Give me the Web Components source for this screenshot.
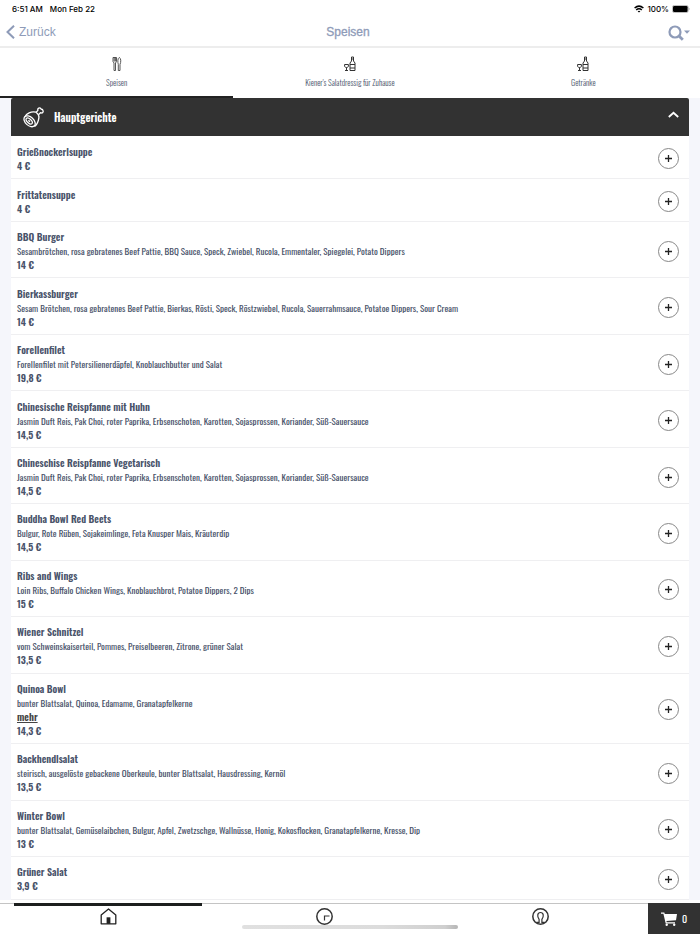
<!DOCTYPE html>
<html lang="de">
<head>
<meta charset="utf-8">
<meta name="viewport" content="width=device-width, initial-scale=1">
<title>Speisen</title>
<style>
  body {
    margin: 0;
    background: #fff;
    font-family: Oswald, "Liberation Sans Narrow", "Liberation Sans", sans-serif;
    color: #49536a;
  }
</style>
</head>
<body>
<menu-app></menu-app>

<script>
const dishes = [
  { name: 'Grießnockerlsuppe', price: '4 €' },
  { name: 'Frittatensuppe', price: '4 €' },
  { name: 'BBQ Burger', text: 'Sesambrötchen, rosa gebratenes Beef Pattie, BBQ Sauce, Speck, Zwiebel, Rucola, Emmentaler, Spiegelei, Potato Dippers', price: '14 €' },
  { name: 'Bierkassburger', text: 'Sesam Brötchen, rosa gebratenes Beef Pattie, Bierkas, Rösti, Speck, Röstzwiebel, Rucola, Sauerrahmsauce, Potatoe Dippers, Sour Cream', price: '14 €' },
  { name: 'Forellenfilet', text: 'Forellenfilet mit Petersilienerdäpfel, Knoblauchbutter und Salat', price: '19,8 €' },
  { name: 'Chinesische Reispfanne mit Huhn', text: 'Jasmin Duft Reis, Pak Choi, roter Paprika, Erbsenschoten, Karotten, Sojasprossen, Koriander, Süß-Sauersauce', price: '14,5 €' },
  { name: 'Chineschise Reispfanne Vegetarisch', text: 'Jasmin Duft Reis, Pak Choi, roter Paprika, Erbsenschoten, Karotten, Sojasprossen, Koriander, Süß-Sauersauce', price: '14,5 €' },
  { name: 'Buddha Bowl Red Beets', text: 'Bulgur, Rote Rüben, Sojakeimlinge, Feta Knusper Mais, Kräuterdip', price: '14,5 €' },
  { name: 'Ribs and Wings', text: 'Loin Ribs, Buffalo Chicken Wings, Knoblauchbrot, Potatoe Dippers, 2 Dips', price: '15 €' },
  { name: 'Wiener Schnitzel', text: 'vom Schweinskaiserteil, Pommes, Preiselbeeren, Zitrone, grüner Salat', price: '13,5 €' },
  { name: 'Quinoa Bowl', text: 'bunter Blattsalat, Quinoa, Edamame, Granatapfelkerne', more: true, price: '14,3 €' },
  { name: 'Backhendlsalat', text: 'steirisch, ausgelöste gebackene Oberkeule, bunter Blattsalat, Hausdressing, Kernöl', price: '13,5 €' },
  { name: 'Winter Bowl', text: 'bunter Blattsalat, Gemüselaibchen, Bulgur, Apfel, Zwetzschge, Wallnüsse, Honig, Kokosflocken, Granatapfelkerne, Kresse, Dip', price: '13 €' },
  { name: 'Grüner Salat', price: '3,9 €' }
]

const bottleIcon = `
  <svg width="12" height="16" viewBox="0 0 12 16" fill="none" stroke="#333" stroke-width="1" aria-hidden="true">
    <path d="M7.500 1h2v4l1.500 2v7.500h-5V7l1.500-2zM7.500 3h2M6 8.500h5M6 12h5"/>
    <path d="M.6 8.500h3.800v1.500c0 2-3.800 2-3.800 0zM2.500 11.500v3M1 14.500h3"/>
  </svg>`

/**
 * Clock, wifi and battery line.
 */
class StatusBar extends HTMLElement {
  constructor () {
    super()
    this.attachShadow({ mode: 'open' }).innerHTML = `
      <style>
        :host {
          display: flex;
          justify-content: space-between;
          align-items: center;
          height: 17px;
          padding: 0 10px 0 12px;
          font: 500 8px/16px Inter, "Liberation Sans", sans-serif;
          color: #000;
        }
        div { display: flex; align-items: center; }
        .left { gap: 7px; }
        .right { gap: 3px; }
      </style>
      <div class="left"><span>6:51 AM</span><span>Mon Feb 22</span></div>
      <div class="right">
        <svg width="10" height="8" viewBox="0 0 10 8" fill="none" stroke="#000" stroke-width="1.500" aria-hidden="true">
          <path d="M.6 3q4.400-3.700 8.800 0M2.200 4.900q2.800-2.300 5.600 0"/>
          <path d="M5 7.600L3.600 6.200q1.400-1.100 2.800 0z" fill="#000" stroke="none"/>
        </svg>
        <span>100%</span>
        <svg width="18" height="8" viewBox="0 0 18 8" aria-hidden="true">
          <rect x=".4" y=".4" width="15.800" height="7.200" rx="2" fill="none" stroke="#999" stroke-width=".7"/>
          <rect x="1" y="1" width="14.600" height="6" rx="1.200"/>
          <path d="M16.800 2.800q1.500 1.200 0 2.400z" fill="#999"/>
        </svg>
      </div>`
  }
}

/**
 * Title bar with back button and search.
 */
class NavBar extends HTMLElement {
  constructor () {
    super()
    this.attachShadow({ mode: 'open' }).innerHTML = `
      <style>
        :host {
          display: grid;
          grid-template-columns: 1fr auto 1fr;
          align-items: center;
          height: 29px;
          padding: 0 10px 0 6px;
          border-bottom: 2px solid #ededed;
          font: 400 12px/16px "Liberation Sans", Arial, sans-serif;
          color: #8e9bb8;
        }
        button {
          display: flex;
          align-items: center;
          gap: 4px;
          padding: 0;
          border: 0;
          background: none;
          font: inherit;
          color: inherit;
          cursor: pointer;
        }
        .search { justify-self: end; padding-top: 3px; }
        h1 { margin: 0; font: inherit; -webkit-text-stroke: .3px; }
      </style>
      <button class="back">
        <svg width="9" height="14" viewBox="0 0 9 14" fill="none" stroke="currentColor" stroke-width="2" aria-hidden="true"><path d="M8 .7L1.500 7 8 13.300"/></svg>
        Zurück
      </button>
      <h1><slot></slot></h1>
      <button class="search" aria-label="Suche">
        <svg width="22" height="16" viewBox="0 0 22 16" aria-hidden="true">
          <circle cx="7" cy="7" r="5.500" fill="none" stroke="currentColor" stroke-width="2.200"/>
          <path d="M11 11l3.800 3.800" stroke="currentColor" stroke-width="2.800"/>
          <path d="M16 5.500h6l-3 3.200z" fill="currentColor"/>
        </svg>
      </button>`
  }
}

/**
 * One category tab. Icon comes in through the "icon" slot.
 */
class CategoryTab extends HTMLElement {
  constructor () {
    super()
    this.attachShadow({ mode: 'open' }).innerHTML = `
      <style>
        :host { display: block; flex: 1; border-bottom: 2px solid #fff; }
        :host([active]) { border-bottom-color: #222; }
        button {
          display: flex;
          flex-direction: column;
          align-items: center;
          gap: 4px;
          width: 100%;
          padding: 8px 0 7px;
          border: 0;
          background: none;
          font: inherit;
          font-size: 8px;
          font-weight: 300;
          line-height: 13px;
          color: inherit;
          cursor: pointer;
        }
        ::slotted(svg) { display: block; }
      </style>
      <button><slot name="icon"></slot><span><slot></slot></span></button>`
  }
}

/**
 * Dark header with the rows of the section below it.
 */
class MenuSection extends HTMLElement {
  constructor () {
    super()
    this.attachShadow({ mode: 'open' }).innerHTML = `
      <style>
        :host { display: flex; flex-direction: column; flex: 1; background: #fff; }
        button {
          display: flex;
          align-items: center;
          gap: 10px;
          height: 38px;
          padding: 0 10px 0 12px;
          border: 0;
          border-radius: 2px 2px 0 0;
          background: #323232;
          font: inherit;
          font-size: 11px;
          font-weight: 600;
          color: #fff;
          cursor: pointer;
        }
        span { flex: 1; text-align: left; }
        .arrow { margin-bottom: 6px; }
      </style>
      <button aria-expanded="true">
        <svg width="21" height="21" viewBox="0 0 21 21" fill="none" stroke="#fff" stroke-width="1.300" stroke-linejoin="round" aria-hidden="true">
          <path d="M1.800 10C3.500 6.500 8 4 13 5.200c2.600 1.800 3.600 4.500 2.400 8-.8 2.700-2 5.300-4 6.300"/>
          <ellipse cx="6.600" cy="14.300" rx="4.200" ry="6.600" transform="rotate(-47 6.600 14.300)"/>
          <ellipse cx="6.200" cy="14" rx="2" ry="3.800" transform="rotate(-47 6.200 14)"/>
          <path d="M5.400 13.200l1.600 1.600"/>
          <path d="M13.200 5.300l1.700-1.900C14.200 1.200 16.800-.1 18 2c2.600.4 3 3.700.5 4l-1-.3-2.100 2.200"/>
        </svg>
        <span></span>
        <svg class="arrow" width="11" height="7" viewBox="0 0 11 7" fill="none" stroke="#fff" stroke-width="1.800" aria-hidden="true"><path d="M.8 6l4.700-4.200L10.200 6"/></svg>
      </button>
      <slot></slot>`
  }

  connectedCallback () {
    this.shadowRoot.querySelector('span').textContent = this.getAttribute('heading')
  }
}

/**
 * Dish with name, optional description and price.
 */
class MenuItem extends HTMLElement {
  constructor () {
    super()
    this.attachShadow({ mode: 'open' })
  }

  set dish (dish) {
    this.shadowRoot.innerHTML = `
      <style>
        :host {
          display: flex;
          box-sizing: border-box;
          flex: 1 0 auto;
          align-items: center;
          gap: 16px;
          min-height: 43px;
          padding: 8px 10px 5px 6px;
          border-bottom: 1px solid #efeff1;
          font-size: 10px;
          line-height: 14px;
        }
        .info { flex: 1; }
        h3, p { margin: 0; font-size: inherit; font-weight: 600; }
        .text { font-size: 9px; font-weight: 400; }
        a { display: block; width: fit-content; font-weight: 600; color: #444; }
        button {
          display: grid;
          place-items: center;
          width: 21px;
          height: 21px;
          margin: -3px 0;
          padding: 0;
          border: 1px solid #888;
          border-radius: 50%;
          background: #fff;
          cursor: pointer;
        }
      </style>
      <div class="info">
        <h3>${dish.name}</h3>
        ${dish.text ? `<p class="text">${dish.text}</p>` : ''}
        ${dish.more ? '<a href="#">mehr</a>' : ''}
        <p>${dish.price}</p>
      </div>
      <button aria-label="${dish.name} hinzufügen">
        <svg width="7" height="7" viewBox="0 0 7 7" stroke="#222" stroke-width="1.300" aria-hidden="true"><path d="M3.500 0v7M0 3.500h7"/></svg>
      </button>`
  }
}

/**
 * Bottom navigation and cart.
 */
class BottomBar extends HTMLElement {
  constructor () {
    super()
    this.attachShadow({ mode: 'open' }).innerHTML = `
      <style>
        :host {
          position: relative;
          display: flex;
          height: 31px;
          background: #fff;
        }
        nav { display: flex; flex: 1; box-shadow: inset 0 1px #c4c4c4; }
        a { flex: 1; display: flex; flex-direction: column; align-items: center; padding: 0 14px; }
        a::before { content: ""; width: 100%; height: 3px; }
        a.active::before { background: #1c1f1e; }
        a svg { margin-top: 2px; }
        button {
          display: flex;
          align-items: center;
          justify-content: center;
          gap: 5px;
          width: 52px;
          padding: 0;
          border: 0;
          background: #323232;
          font: inherit;
          font-size: 10px;
          font-weight: 400;
          color: #fff;
          cursor: pointer;
        }
        .indicator {
          position: absolute;
          left: 50%;
          bottom: 5px;
          width: 216px;
          height: 4px;
          margin-left: -108px;
          border-radius: 2px;
          background: linear-gradient(90deg, #e0e0e0, #dcdcdc 65%, #cfcfcf 94%, #b5b5b5);
        }
      </style>
      <nav>
        <a class="active" href="#" aria-label="Start">
          <svg width="17" height="17" viewBox="0 0 17 17" fill="none" stroke="#222" stroke-width="1.300" stroke-linejoin="round">
            <path d="M1.200 15.800V7L8.500 1l7.300 6v8.800z"/><path d="M6.600 9.300h3.800v6.500H6.600z" fill="#222" stroke="none"/>
          </svg>
        </a>
        <a href="#" aria-label="Verlauf">
          <svg width="17" height="17" viewBox="0 0 17 17" fill="none" stroke="#333" stroke-width="1.500">
            <circle cx="8.500" cy="8.500" r="7.700"/><path d="M8.500 12.500V8h5" stroke-width="1.200"/>
          </svg>
        </a>
        <a href="#" aria-label="Konto">
          <svg width="17" height="17" viewBox="0 0 17 17" fill="none" stroke="#333" stroke-width="1.500">
            <circle cx="8.500" cy="8.500" r="7.700"/><path d="M4.300 14.300h2.800v-3C5 8.500 5.200 4.500 8.500 4.500s3.500 4 1.400 6.800v3h2.800" stroke-width="1.200"/>
          </svg>
        </a>
      </nav>
      <button aria-label="Warenkorb">
        <svg width="16" height="14" viewBox="0 0 16 14" fill="#fff" aria-hidden="true">
          <path d="M0 .5h3.300l.5 1.500H16l-1 6.200-9.600.8.300 1.200H14v1.300H4.700L2.400 1.800H0z"/>
          <circle cx="5.700" cy="12.700" r="1.200"/><circle cx="13.200" cy="12.700" r="1.200"/>
        </svg>
        <span>0</span>
      </button>
      <div class="indicator"></div>`
  }
}

/**
 * The whole screen.
 */
class MenuApp extends HTMLElement {
  constructor () {
    super()
    this.attachShadow({ mode: 'open' }).innerHTML = `
      <style>
        :host { display: flex; flex-direction: column; min-height: 100vh; }
        .tabs { display: flex; }
        main {
          display: flex;
          flex-direction: column;
          flex: 1;
          padding: 0 11px;
          margin-bottom: 3px;
          background: #f5f6fb;
        }
      </style>
      <status-bar></status-bar>
      <nav-bar>Speisen</nav-bar>
      <div class="tabs">
        <category-tab active>
          <svg slot="icon" width="10" height="16" viewBox="0 0 10 16" fill="none" stroke="#444" stroke-width=".9">
            <path d="M1 1.500v4l1 1.500v7.500h1.500V7l1-1.500v-4zM2.200 1.500v4M3.400 1.500v4"/>
            <path d="M6.300 14.500V8.500C5.500 6 5.700 2 7.300 1.500 9 2 9.200 6 8 8.500v6z"/>
          </svg>Speisen</category-tab>
        <category-tab>${bottleIcon.replace('<svg', '<svg slot="icon"')}Kiener's Salatdressig für Zuhause</category-tab>
        <category-tab>${bottleIcon.replace('<svg', '<svg slot="icon"')}Getränke</category-tab>
      </div>
      <main><menu-section heading="Hauptgerichte"></menu-section></main>
      <bottom-bar></bottom-bar>`
  }

  connectedCallback () {
    const section = this.shadowRoot.querySelector('menu-section')
    for (const dish of dishes) {
      const item = document.createElement('menu-item')
      item.dish = dish
      section.appendChild(item)
    }
  }
}

customElements.define('status-bar', StatusBar)
customElements.define('nav-bar', NavBar)
customElements.define('category-tab', CategoryTab)
customElements.define('menu-section', MenuSection)
customElements.define('menu-item', MenuItem)
customElements.define('bottom-bar', BottomBar)
customElements.define('menu-app', MenuApp)
</script>
</body>
</html>
